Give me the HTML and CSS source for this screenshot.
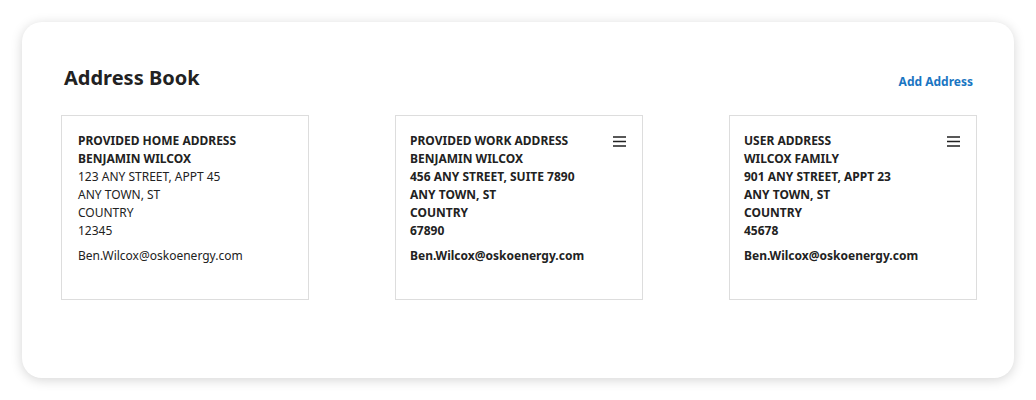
FILE: index.html
```html
<!DOCTYPE html>
<html lang="en">
<head>
  <meta charset="UTF-8">
  <title>Address Book</title>
  <link rel="stylesheet" href="styles.css">
</head>
<body>

  <div class="panel">
    <div class="panel-head">
      <h1>Address Book</h1>
      <a class="add-link" href="#">Add Address</a>
    </div>

    <div class="cards">
      <div class="card">
        <div class="lines">
          <strong>PROVIDED HOME ADDRESS</strong>
          <strong>BENJAMIN WILCOX</strong>
          <span>123 ANY STREET, APPT 45</span>
          <span>ANY TOWN, ST</span>
          <span>COUNTRY</span>
          <span>12345</span>
          <span class="email">Ben.Wilcox@oskoenergy.com</span>
        </div>
      </div>

      <div class="card bold">
        <div class="lines">
          <span>PROVIDED WORK ADDRESS</span>
          <span>BENJAMIN WILCOX</span>
          <span>456 ANY STREET, SUITE 7890</span>
          <span>ANY TOWN, ST</span>
          <span>COUNTRY</span>
          <span>67890</span>
          <span class="email">Ben.Wilcox@oskoenergy.com</span>
        </div>
        <button class="menu" aria-label="Menu">
          <svg width="13" height="11" viewBox="0 0 13 11"><path d="M0 1h13M0 5.5h13M0 10h13" stroke="#222" stroke-width="1.4"/></svg>
        </button>
      </div>

      <div class="card bold">
        <div class="lines">
          <span>USER ADDRESS</span>
          <span>WILCOX FAMILY</span>
          <span>901 ANY STREET, APPT 23</span>
          <span>ANY TOWN, ST</span>
          <span>COUNTRY</span>
          <span>45678</span>
          <span class="email">Ben.Wilcox@oskoenergy.com</span>
        </div>
        <button class="menu" aria-label="Menu">
          <svg width="13" height="11" viewBox="0 0 13 11"><path d="M0 1h13M0 5.5h13M0 10h13" stroke="#222" stroke-width="1.4"/></svg>
        </button>
      </div>
    </div>
  </div>

</body>
</html>
```

FILE: styles.css
```css
body {
  margin: 0;
  padding: 22px;
  background: #fff;
  color: #222;
  font-family: "Noto Sans", "Open Sans", sans-serif;
}

.panel {
  width: 992px;
  height: 356px;
  box-sizing: border-box;
  padding: 42px 37px 0 39px;
  background: #fff;
  border-radius: 20px;
  box-shadow: 0 2px 12px rgba(0, 0, 0, 0.17);
}

.panel-head {
  display: flex;
  justify-content: space-between;
  align-items: flex-end;
  padding: 0 4px 0 3px;
}

h1 {
  margin: 0;
  font-size: 20px;
  line-height: 28px;
  font-weight: 700;
  color: #222;
}

.add-link {
  margin-bottom: 1px;
  font-size: 12px;
  line-height: 18px;
  font-weight: 700;
  color: #1a75c2;
  text-decoration: none;
}

.cards {
  display: flex;
  justify-content: space-between;
  margin-top: 23px;
}

.card {
  width: 248px;
  height: 185px;
  box-sizing: border-box;
  border: 1px solid #ddd;
  padding: 16px 16px 14px;
  display: flex;
  justify-content: space-between;
  align-items: flex-start;
}

.card.bold {
  padding-left: 14px;
}

.lines {
  display: flex;
  flex-direction: column;
  font-size: 12px;
  line-height: 18px;
}

.lines strong,
.card.bold .lines {
  font-weight: 700;
}

.email {
  margin-top: 7px;
}

.menu {
  border: none;
  background: none;
  padding: 0;
  margin-top: 4px;
  cursor: pointer;
  line-height: 0;
}
```
